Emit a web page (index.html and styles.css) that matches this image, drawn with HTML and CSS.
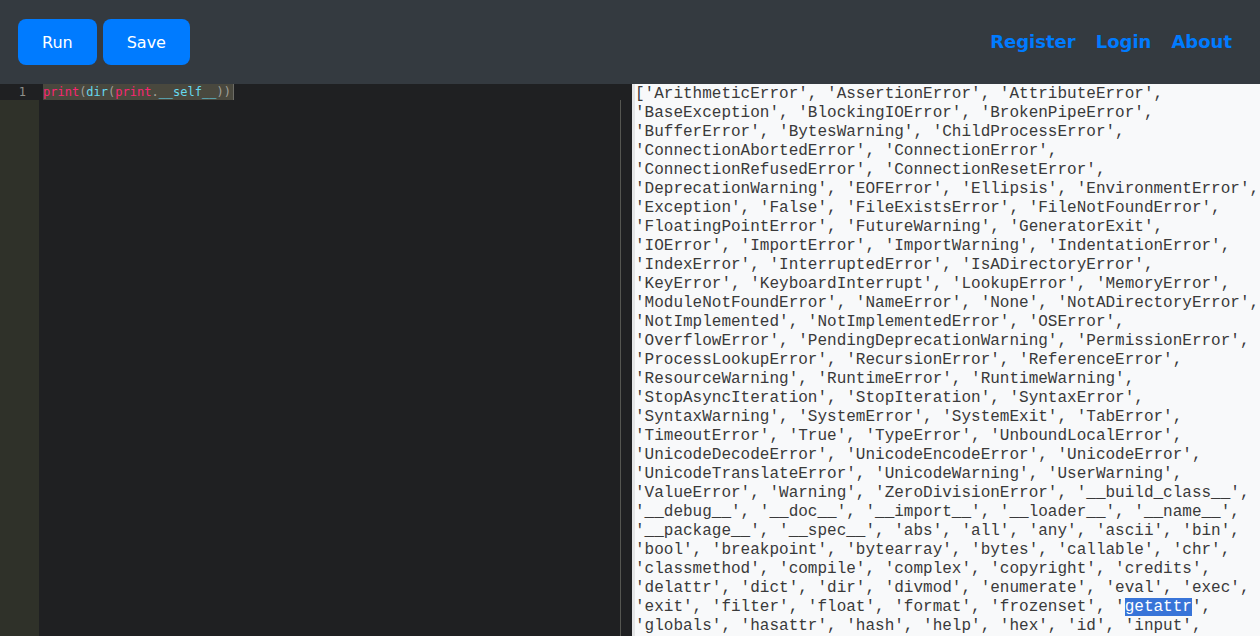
FILE: index.html
```html
<!DOCTYPE html>
<html lang="en">
<head>
    <meta charset="UTF-8">
    <title>Python Playground</title>
    <link rel="stylesheet" href="styles.css">
</head>
<body>
    <div class="navbar">
        <div class="actions">
            <button class="btn">Run</button>
            <button class="btn">Save</button>
        </div>
        <div class="links">
            <a href="#">Register</a>
            <a href="#">Login</a>
            <a href="#">About</a>
        </div>
    </div>

    <div class="workspace">
        <div class="editor">
            <div class="gutter">
                <div class="gutter-active">1</div>
            </div>
            <div class="code">
                <div class="code-line"><span class="sel"><span class="kw">print</span><span class="pn">(</span><span class="fn">dir</span><span class="pn">(</span><span class="kw">print</span><span class="pn">.</span><span class="fn">__self__</span><span class="pn">))</span></span><span class="cursor"></span></div>
                <div class="print-margin"></div>
            </div>
        </div>
<pre class="output">['ArithmeticError', 'AssertionError', 'AttributeError',
'BaseException', 'BlockingIOError', 'BrokenPipeError',
'BufferError', 'BytesWarning', 'ChildProcessError',
'ConnectionAbortedError', 'ConnectionError',
'ConnectionRefusedError', 'ConnectionResetError',
'DeprecationWarning', 'EOFError', 'Ellipsis', 'EnvironmentError',
'Exception', 'False', 'FileExistsError', 'FileNotFoundError',
'FloatingPointError', 'FutureWarning', 'GeneratorExit',
'IOError', 'ImportError', 'ImportWarning', 'IndentationError',
'IndexError', 'InterruptedError', 'IsADirectoryError',
'KeyError', 'KeyboardInterrupt', 'LookupError', 'MemoryError',
'ModuleNotFoundError', 'NameError', 'None', 'NotADirectoryError',
'NotImplemented', 'NotImplementedError', 'OSError',
'OverflowError', 'PendingDeprecationWarning', 'PermissionError',
'ProcessLookupError', 'RecursionError', 'ReferenceError',
'ResourceWarning', 'RuntimeError', 'RuntimeWarning',
'StopAsyncIteration', 'StopIteration', 'SyntaxError',
'SyntaxWarning', 'SystemError', 'SystemExit', 'TabError',
'TimeoutError', 'True', 'TypeError', 'UnboundLocalError',
'UnicodeDecodeError', 'UnicodeEncodeError', 'UnicodeError',
'UnicodeTranslateError', 'UnicodeWarning', 'UserWarning',
'ValueError', 'Warning', 'ZeroDivisionError', '__build_class__',
'__debug__', '__doc__', '__import__', '__loader__', '__name__',
'__package__', '__spec__', 'abs', 'all', 'any', 'ascii', 'bin',
'bool', 'breakpoint', 'bytearray', 'bytes', 'callable', 'chr',
'classmethod', 'compile', 'complex', 'copyright', 'credits',
'delattr', 'dict', 'dir', 'divmod', 'enumerate', 'eval', 'exec',
'exit', 'filter', 'float', 'format', 'frozenset', '<span class="hl">getattr</span>',
'globals', 'hasattr', 'hash', 'help', 'hex', 'id', 'input',</pre>
    </div>
</body>
</html>
```

FILE: styles.css
```css
html, body {
    height: 100%;
}

body {
    margin: 0;
    font-family: 'DejaVu Sans', sans-serif;
    background-color: #1f2022;
    overflow: hidden;
    display: flex;
    flex-direction: column;
}

.navbar {
    background-color: #343a40;
    height: 84px;
    flex: 0 0 84px;
    display: flex;
    justify-content: space-between;
    align-items: center;
    padding: 0 28px 0 18px;
}

.actions {
    display: flex;
    gap: 6px;
}

.btn {
    background-color: #007bff;
    color: #ffffff;
    border: none;
    border-radius: 8px;
    height: 46px;
    padding: 0 24px;
    font-family: 'DejaVu Sans', sans-serif;
    font-size: 16px;
    cursor: pointer;
}

.links {
    display: flex;
    gap: 20px;
    margin-top: -2px;
}

.links a {
    color: #007bff;
    font-weight: bold;
    font-size: 18px;
    text-decoration: none;
}

.workspace {
    flex: 1;
    display: flex;
    min-height: 0;
}

/* editor pane */
.editor {
    width: 632px;
    display: flex;
    background-color: #1f2022;
}

.gutter {
    width: 39px;
    background-color: #2f3129;
}

.gutter-active {
    height: 16px;
    background-color: #1f2022;
    color: #8f908a;
    font-family: 'DejaVu Sans Mono', monospace;
    font-size: 12px;
    line-height: 16px;
    text-align: right;
    padding-right: 13px;
}

.code {
    flex: 1;
    position: relative;
    padding-left: 4px;
}

.code-line {
    font-family: 'DejaVu Sans Mono', monospace;
    font-size: 12px;
    line-height: 16px;
    height: 16px;
    display: flex;
}

.sel {
    background-color: #49483e;
    padding-right: 2px;
}

.cursor {
    width: 1px;
    background-color: #6c6c66;
}

.kw { color: #f92672; }
.fn { color: #66d9ef; }
.pn { color: #a0a09a; }

.print-margin {
    position: absolute;
    left: 581px;
    top: 16px;
    bottom: 0;
    width: 1px;
    background-color: #555651;
}

/* output pane */
.output {
    flex: 1;
    margin: 0;
    background-color: #f8f9fa;
    border-left: 3px solid #e4e5e6;
    color: #3a3a3a;
    font-family: 'Liberation Mono', monospace;
    font-size: 16px;
    line-height: 19px;
    padding: 1px 0 0 0;
    overflow: hidden;
    white-space: pre;
}

.hl {
    background-color: #3874d8;
    color: #ffffff;
}
```
